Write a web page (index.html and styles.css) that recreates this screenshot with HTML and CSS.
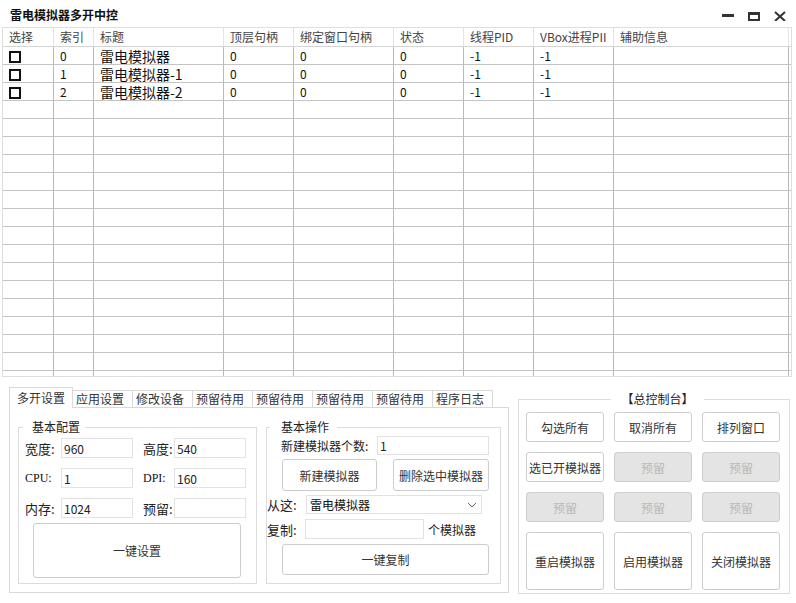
FILE: index.html
```html
<!DOCTYPE html>
<html lang="zh-CN">
<head>
  <meta charset="UTF-8" />
  <title>雷电模拟器多开中控</title>
  <link rel="stylesheet" href="styles.css">
</head>
<body>
<div class="window">

  <div class="titlebar">
    <span class="title">雷电模拟器多开中控</span>
    <div class="win-controls">
      <svg class="win-btn" width="14" height="14" viewBox="0 0 14 14"><rect x="1" y="7" width="12" height="3" fill="#333"/></svg>
      <svg class="win-btn" width="14" height="14" viewBox="0 0 14 14"><rect x="2" y="6" width="10" height="7" fill="none" stroke="#333" stroke-width="2"/><rect x="1" y="5" width="12" height="3" fill="#333"/></svg>
      <svg class="win-btn" width="14" height="14" viewBox="0 0 14 14"><path d="M2 5 L12 14 M12 5 L2 14" stroke="#333" stroke-width="2"/></svg>
    </div>
  </div>

  <!-- 模拟器列表 -->
  <div class="grid">
    <table>
      <colgroup>
        <col style="width:51px"><col style="width:40px"><col style="width:130px"><col style="width:70px"><col style="width:100px">
        <col style="width:70px"><col style="width:70px"><col style="width:80px"><col style="width:175px"><col style="width:2px">
      </colgroup>
      <thead>
        <tr>
          <th>选择</th><th>索引</th><th>标题</th><th>顶层句柄</th><th>绑定窗口句柄</th>
          <th>状态</th><th>线程PID</th><th>VBox进程PII</th><th>辅助信息</th><th></th>
        </tr>
      </thead>
      <tbody>
        <tr><td><span class="check"></span></td><td>0</td><td class="name">雷电模拟器</td><td>0</td><td>0</td><td>0</td><td>-1</td><td>-1</td><td></td><td></td></tr>
        <tr><td><span class="check"></span></td><td>1</td><td class="name">雷电模拟器-1</td><td>0</td><td>0</td><td>0</td><td>-1</td><td>-1</td><td></td><td></td></tr>
        <tr><td><span class="check"></span></td><td>2</td><td class="name">雷电模拟器-2</td><td>0</td><td>0</td><td>0</td><td>-1</td><td>-1</td><td></td><td></td></tr>
        <tr><td></td><td></td><td></td><td></td><td></td><td></td><td></td><td></td><td></td><td></td></tr>
        <tr><td></td><td></td><td></td><td></td><td></td><td></td><td></td><td></td><td></td><td></td></tr>
        <tr><td></td><td></td><td></td><td></td><td></td><td></td><td></td><td></td><td></td><td></td></tr>
        <tr><td></td><td></td><td></td><td></td><td></td><td></td><td></td><td></td><td></td><td></td></tr>
        <tr><td></td><td></td><td></td><td></td><td></td><td></td><td></td><td></td><td></td><td></td></tr>
        <tr><td></td><td></td><td></td><td></td><td></td><td></td><td></td><td></td><td></td><td></td></tr>
        <tr><td></td><td></td><td></td><td></td><td></td><td></td><td></td><td></td><td></td><td></td></tr>
        <tr><td></td><td></td><td></td><td></td><td></td><td></td><td></td><td></td><td></td><td></td></tr>
        <tr><td></td><td></td><td></td><td></td><td></td><td></td><td></td><td></td><td></td><td></td></tr>
        <tr><td></td><td></td><td></td><td></td><td></td><td></td><td></td><td></td><td></td><td></td></tr>
        <tr><td></td><td></td><td></td><td></td><td></td><td></td><td></td><td></td><td></td><td></td></tr>
        <tr><td></td><td></td><td></td><td></td><td></td><td></td><td></td><td></td><td></td><td></td></tr>
        <tr><td></td><td></td><td></td><td></td><td></td><td></td><td></td><td></td><td></td><td></td></tr>
        <tr><td></td><td></td><td></td><td></td><td></td><td></td><td></td><td></td><td></td><td></td></tr>
        <tr><td></td><td></td><td></td><td></td><td></td><td></td><td></td><td></td><td></td><td></td></tr>
        <tr><td></td><td></td><td></td><td></td><td></td><td></td><td></td><td></td><td></td><td></td></tr>
      </tbody>
    </table>
  </div>

  <div class="bottom">
    <!-- 选项卡 -->
    <div class="tabs">
      <div class="tab-strip">
        <span class="tab active">多开设置</span>
        <span class="tab">应用设置</span>
        <span class="tab">修改设备</span>
        <span class="tab">预留待用</span>
        <span class="tab">预留待用</span>
        <span class="tab">预留待用</span>
        <span class="tab">预留待用</span>
        <span class="tab">程序日志</span>
      </div>
      <div class="tab-panel">
        <fieldset class="group config">
          <legend>基本配置</legend>
          <div class="form-grid">
            <label class="lbl">宽度:</label><input class="field" value="960">
            <label class="lbl lbl2">高度:</label><input class="field" value="540">
            <label class="lbl latin">CPU:</label><input class="field" value="1">
            <label class="lbl lbl2 latin">DPI:</label><input class="field" value="160">
            <label class="lbl">内存:</label><input class="field" value="1024">
            <label class="lbl lbl2">预留:</label><input class="field" value="">
          </div>
          <button class="btn btn-setup">一键设置</button>
        </fieldset>

        <fieldset class="group ops">
          <legend>基本操作</legend>
          <div class="row row-count">
            <label class="lbl count-lbl">新建模拟器个数:</label>
            <input class="field count-field" value="1">
          </div>
          <div class="row row-btns">
            <button class="btn btn-new">新建模拟器</button>
            <button class="btn btn-del">删除选中模拟器</button>
          </div>
          <div class="row row-from">
            <label class="lbl from-lbl">从这:</label>
            <div class="combo">
              <span>雷电模拟器</span>
              <svg width="10" height="6" viewBox="0 0 10 6"><path d="M1 1 L5 5 L9 1" fill="none" stroke="#666" stroke-width="1"/></svg>
            </div>
          </div>
          <div class="row row-copy">
            <label class="lbl from-lbl">复制:</label>
            <input class="field copy-field" value="">
            <span class="lbl unit">个模拟器</span>
          </div>
          <button class="btn btn-copy">一键复制</button>
        </fieldset>
      </div>
    </div>

    <!-- 总控制台 -->
    <fieldset class="group console">
      <legend>【总控制台】</legend>
      <div class="console-grid">
        <button class="btn">勾选所有</button>
        <button class="btn">取消所有</button>
        <button class="btn">排列窗口</button>
        <button class="btn">选已开模拟器</button>
        <button class="btn" disabled>预留</button>
        <button class="btn" disabled>预留</button>
        <button class="btn" disabled>预留</button>
        <button class="btn" disabled>预留</button>
        <button class="btn" disabled>预留</button>
        <button class="btn">重启模拟器</button>
        <button class="btn">启用模拟器</button>
        <button class="btn">关闭模拟器</button>
      </div>
    </fieldset>
  </div>

</div>
</body>
</html>
```

FILE: styles.css
```css
* {
  box-sizing: border-box;
}

body {
  margin: 0;
  background: #fff;
  font-family: "Noto Sans CJK SC", "Microsoft YaHei", sans-serif;
  font-size: 12px;
  color: #333;
}

.window {
  width: 796px;
  height: 603px;
  overflow: hidden;
}

/* 标题栏 */
.titlebar {
  height: 27px;
  display: flex;
  align-items: center;
  justify-content: space-between;
  padding: 1px 9px 0 10px;
}

.title {
  font-weight: bold;
  font-size: 12px;
  color: #111;
}

.win-controls {
  display: flex;
  gap: 12px;
}

.win-btn {
  display: block;
}

/* 列表 */
.grid {
  margin-left: 2px;
  width: 790px;
  height: 350px;
  border: 1px solid #dedede;
  overflow: hidden;
}

.grid table {
  width: 788px;
  table-layout: fixed;
  border-collapse: separate;
  border-spacing: 0;
}

.grid th, .grid td {
  height: 18px;
  padding: 0 0 0 6px;
  border-right: 1px solid #b8b8b8;
  border-bottom: 1px solid #c4c4c4;
  text-align: left;
  font-weight: normal;
  white-space: nowrap;
  line-height: 16px;
  color: #111;
}

.grid th {
  height: 19px;
  line-height: 18px;
  color: #444;
  border-right-color: #e4e4e4;
  border-bottom-color: #d4d4d4;
}

.grid th:last-child, .grid td:last-child {
  padding: 0;
  border-right: none;
}

.grid td.name {
  font-size: 14px;
  line-height: 16px;
}

.check {
  display: inline-block;
  width: 12px;
  height: 12px;
  border: 2px solid #111;
  vertical-align: -2px;
}

/* 下方区域 */
.bottom {
  display: flex;
  align-items: flex-start;
  padding: 10px 0 0 9px;
}

.tabs {
  width: 500px;
}

.tab-strip {
  display: flex;
  align-items: flex-end;
  height: 20px;
}

.tab {
  height: 17px;
  line-height: 16px;
  padding: 0 8px 0 3px;
  border-top: 1px solid #d9d9d9;
  border-right: 1px solid #d9d9d9;
  background: #fff;
  color: #333;
}

.tab.active {
  position: relative;
  height: 21px;
  line-height: 19px;
  margin-bottom: -1px;
  padding: 0 7px;
  border-left: 1px solid #d9d9d9;
}

.tab-panel {
  height: 186px;
  border: 1px solid #d9d9d9;
  display: flex;
  align-items: flex-start;
  gap: 9px;
  padding: 11px 7px 0 8px;
}

/* 分组框 */
.group {
  margin: 0;
  min-width: 0;
  border: 1px solid #dcdcdc;
}

.group legend {
  line-height: 16px;
  font-size: 12px;
  color: #222;
}

.config {
  width: 239px;
  height: 165px;
  padding: 3px 0 0 4px;
}

.config legend {
  padding: 0 5px 0 9px;
}

.form-grid {
  display: grid;
  grid-template-columns: 36px 72px 41px 72px;
  grid-auto-rows: 20px;
  row-gap: 10px;
  margin-left: 2px;
  align-items: center;
}

.lbl {
  font-size: 13px;
  color: #222;
  white-space: nowrap;
}

.lbl2 {
  padding-left: 10px;
}

.latin {
  font-family: "Liberation Serif", serif;
  font-size: 12px;
  color: #111;
}

.field {
  height: 20px;
  border: 1px solid #e2e2e2;
  padding: 0 2px;
  font-family: inherit;
  font-size: 12px;
  color: #222;
  background: #fff;
  outline: none;
}

.btn {
  font-family: inherit;
  font-size: 12px;
  color: #333;
  background: #fff;
  border: 1px solid #cdcdcd;
  border-radius: 3px;
  padding: 0;
}

.btn:disabled {
  background: #e4e4e4;
  color: #b9b9b9;
  border-color: #cdcdcd;
}

.btn-setup {
  display: block;
  width: 208px;
  height: 55px;
  margin: 5px 0 0 10px;
}

.ops {
  width: 235px;
  height: 165px;
  padding: 1px 0 0 0;
}

.ops legend {
  margin-left: 3px;
  padding: 0 8px 0 11px;
}

.row {
  display: flex;
  align-items: center;
}

.count-lbl {
  width: 96px;
  margin-left: 14px;
  font-size: 12px;
}

.count-field {
  width: 112px;
  height: 19px;
}

.row-btns {
  margin-top: 4px;
  margin-left: 15px;
  gap: 16px;
}

.btn-new {
  width: 95px;
  height: 32px;
}

.btn-del {
  width: 96px;
  height: 32px;
}

.row-from {
  margin-top: 4px;
}

.from-lbl {
  width: 39px;
}

.combo {
  width: 176px;
  height: 19px;
  border: 1px solid #e2e2e2;
  display: flex;
  align-items: center;
  justify-content: space-between;
  padding: 0 4px 0 3px;
  color: #111;
}

.combo svg {
  display: block;
}

.row-copy {
  margin-top: 5px;
}

.row-copy .from-lbl {
  width: 38px;
}

.copy-field {
  width: 119px;
}

.unit {
  margin-left: 4px;
  font-size: 12px;
}

.btn-copy {
  display: block;
  width: 207px;
  height: 31px;
  margin: 5px 0 0 15px;
}

/* 总控制台 */
.console {
  width: 272px;
  height: 203px;
  margin-left: 9px;
  margin-top: 4px;
  padding: 5px 0 0 7px;
}

.console legend {
  margin: 0 auto;
  padding: 0 10px;
}

.console-grid {
  display: grid;
  grid-template-columns: repeat(3, 78px);
  grid-template-rows: 30px 30px 30px 58px;
  column-gap: 10px;
  row-gap: 10px;
}
```
